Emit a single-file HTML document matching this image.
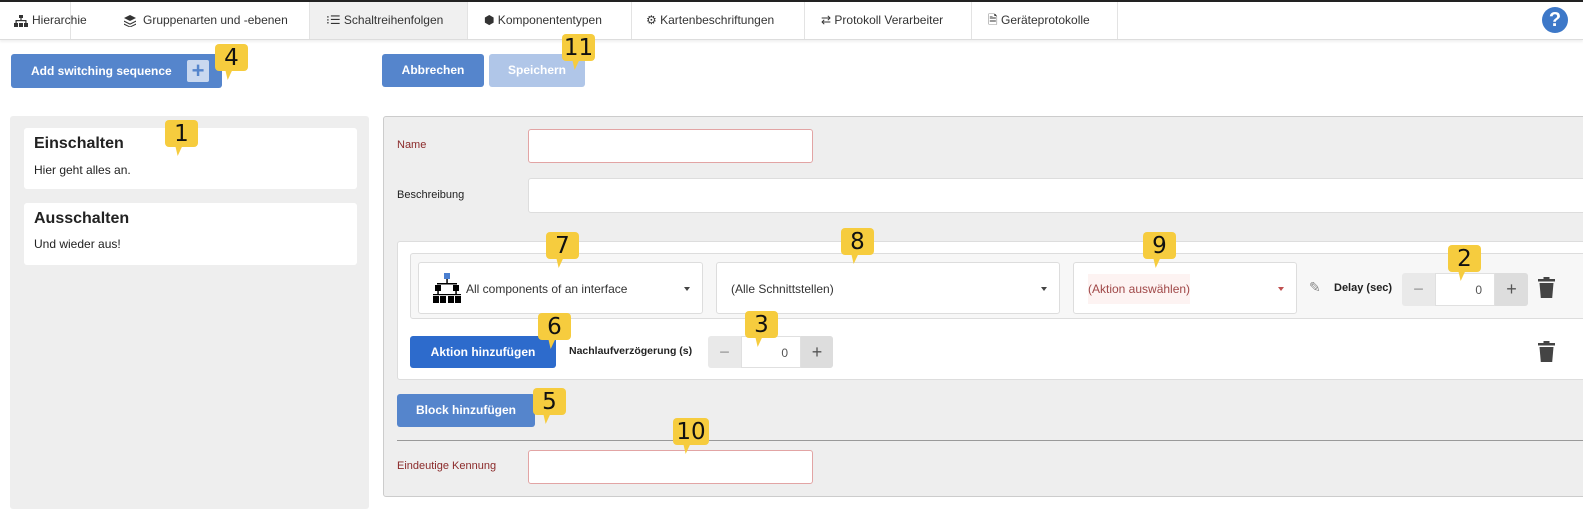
<!DOCTYPE html>
<html><head><meta charset="utf-8">
<style>
*{box-sizing:border-box;margin:0;padding:0}
body{width:1583px;height:509px;overflow:hidden;background:#fff;font-family:"Liberation Sans",sans-serif;font-size:12px;color:#222;position:relative}
.a{position:absolute}
.nav{left:0;top:0;width:1583px;height:40px;border-top:2px solid #222;border-bottom:1px solid #ddd;box-shadow:0 2px 2px rgba(0,0,0,.06)}
.tab{position:absolute;top:2px;height:37px;line-height:37px;font-size:12px;color:#333;border-right:1px solid #e3e3e3;padding-left:14px;white-space:nowrap}
.btn{position:absolute;color:#fff;font-weight:bold;font-size:12px;text-align:center;border-radius:3px}
.call{position:absolute;background:#f6cc3e;border-radius:4px;width:33px;height:27px;font-size:23px;line-height:28px;text-align:center;color:#111;font-family:"DejaVu Sans",sans-serif}
.call:after{content:"";position:absolute;left:8px;bottom:-9px;border-left:7px solid transparent;border-top:10px solid #f6cc3e;transform:skewX(-25deg)}
.inp{position:absolute;background:#fff;border:1px solid #ddd;border-radius:3px}
.red{border-color:#e2a4a4}
.lbl{position:absolute;font-size:11px}
.sel{position:absolute;background:#fff;border:1px solid #ddd;border-radius:3px;font-size:12px;color:#333;line-height:52px;padding-left:14px;white-space:nowrap}
.caret{position:absolute;right:12px;top:24px;border-left:3.5px solid transparent;border-right:3.5px solid transparent;border-top:4px solid #444}
.step{position:absolute;background:#e9e9e9;border-radius:3px;height:33px}
.step span{position:absolute;top:0;height:100%;line-height:32px;text-align:center;font-size:18px;color:#999}
.step i{position:absolute;top:0;height:100%;background:#fff;font-style:normal;text-align:right;padding-right:12px;line-height:32px;font-size:12px;color:#555;border:1px solid #e0e0e0}
</style></head><body>
<div class="a nav"></div>
<div class="tab" style="left:0;width:71px">
<svg class="a" style="left:14px;top:13px" width="14" height="12" viewBox="0 0 14 12"><rect x="5" y="0" width="4" height="3" fill="#333"/><rect x="6.4" y="3" width="1.2" height="3" fill="#333"/><rect x="1.5" y="5" width="11" height="1.2" fill="#333"/><rect x="1.5" y="5" width="1.2" height="3" fill="#333"/><rect x="11.3" y="5" width="1.2" height="3" fill="#333"/><rect x="0" y="8" width="4" height="4" fill="#333"/><rect x="5" y="8" width="4" height="4" fill="#333"/><rect x="10" y="8" width="4" height="4" fill="#333"/></svg>
<span style="margin-left:18px">Hierarchie</span></div>
<div class="tab" style="left:71px;width:239px">
<svg class="a" style="left:53px;top:13px" width="12" height="12" viewBox="0 0 12 12"><path d="M6 0L12 3 6 6 0 3z" fill="#333"/><path d="M0 5.5L6 8.5 12 5.5 12 6.8 6 9.8 0 6.8z" fill="#333"/><path d="M0 8.5L6 11.5 12 8.5 12 9.8 6 12.5 0 9.8z" fill="#333"/></svg>
<span style="margin-left:58px">Gruppenarten und -ebenen</span></div>
<div class="tab" style="left:310px;width:158px;background:#f0f0f0"><span style="margin-left:2px">⁝☰ Schaltreihenfolgen</span></div>
<div class="tab" style="left:468px;width:164px"><span style="margin-left:2px">⬢ Komponententypen</span></div>
<div class="tab" style="left:632px;width:173px"><span style="margin-left:0px">⚙ Kartenbeschriftungen</span></div>
<div class="tab" style="left:805px;width:167px"><span style="margin-left:2px">⇄ Protokoll Verarbeiter</span></div>
<div class="tab" style="left:972px;width:146px"><span style="margin-left:2px">🗎 Geräteprotokolle</span></div>
<div class="a" style="left:1542px;top:7px;width:26px;height:26px;border-radius:50%;background:#3d78c8;color:#fff;font-weight:bold;font-size:20px;text-align:center;line-height:26px">?</div>

<div class="btn" style="left:11px;top:54px;width:211px;height:34px;background:#5585cc;line-height:34px;text-align:left;padding-left:20px">Add switching sequence<span class="a" style="left:176px;top:6px;width:22px;height:22px;background:#c9d8ef;border-radius:2px;color:#5585cc;font-size:22px;line-height:22px;text-align:center">+</span></div>
<div class="btn" style="left:382px;top:54px;width:102px;height:33px;background:#5585cc;line-height:33px">Abbrechen</div>
<div class="btn" style="left:489px;top:54px;width:96px;height:33px;background:#b0c6e8;line-height:33px">Speichern</div>

<div class="a" style="left:10px;top:116px;width:359px;height:393px;background:#eee;border-radius:3px"></div>
<div class="a" style="left:24px;top:128px;width:333px;height:61px;background:#fff;border-radius:3px"><div class="a" style="left:10px;top:7px;font-size:16px;font-weight:bold">Einschalten</div><div class="a" style="left:10px;top:35px;font-size:12px">Hier geht alles an.</div></div>
<div class="a" style="left:24px;top:203px;width:333px;height:62px;background:#fff;border-radius:3px"><div class="a" style="left:10px;top:7px;font-size:16px;font-weight:bold">Ausschalten</div><div class="a" style="left:10px;top:34px;font-size:12px">Und wieder aus!</div></div>

<div class="a" style="left:383px;top:116px;width:1210px;height:381px;background:#eee;border:1px solid #ccc;border-radius:3px"></div>
<div class="lbl" style="left:397px;top:139px;color:#8b2a2a">Name</div>
<div class="inp red" style="left:528px;top:129px;width:285px;height:34px"></div>
<div class="lbl" style="left:397px;top:189px">Beschreibung</div>
<div class="inp" style="left:528px;top:178px;width:1060px;height:35px"></div>

<div class="a" style="left:397px;top:241px;width:1190px;height:139px;background:#fff;border:1px solid #ddd;border-radius:3px"></div>
<div class="a" style="left:410px;top:253px;width:1180px;height:66px;background:#f7f7f7;border:1px solid #ddd;border-radius:3px"></div>
<div class="sel" style="left:418px;top:262px;width:285px;height:52px;padding-left:47px">All components of an interface<div class="caret"></div>
<svg class="a" style="left:14px;top:10px" width="28" height="31" viewBox="0 0 28 31"><rect x="11" y="0" width="6" height="6" fill="#4a7fd0"/><rect x="13.3" y="6" width="1.5" height="5" fill="#000"/><rect x="4" y="10" width="20" height="1.5" fill="#000"/><rect x="2" y="12" width="6" height="6" fill="#000"/><rect x="20" y="12" width="6" height="6" fill="#000"/><rect x="4.3" y="18" width="1.5" height="4" fill="#000"/><rect x="22.3" y="18" width="1.5" height="4" fill="#000"/><rect x="0" y="21" width="14" height="1.2" fill="#000"/><rect x="14" y="21" width="14" height="1.2" fill="#000"/><rect x="0" y="23" width="6" height="7" fill="#000"/><rect x="7" y="23" width="6" height="7" fill="#000"/><rect x="15" y="23" width="6" height="7" fill="#000"/><rect x="22" y="23" width="6" height="7" fill="#000"/></svg></div>
<div class="sel" style="left:716px;top:262px;width:344px;height:52px">(Alle Schnittstellen)<div class="caret"></div></div>
<div class="sel red" style="left:1073px;top:262px;width:224px;height:52px;color:#a04848"><span style="background:#fdf3f2;padding:8px 0">(Aktion auswählen)</span><div class="caret" style="border-top-color:#c05050"></div></div>
<div class="a" style="left:1309px;top:279px;font-size:14px;color:#888">✎</div>
<div class="lbl" style="left:1334px;top:282px;font-weight:bold">Delay (sec)</div>
<div class="step" style="left:1402px;top:273px;width:126px"><span style="left:0;width:33px">−</span><i style="left:33px;width:60px">0</i><span style="left:93px;width:33px;background:#ddd;color:#555;border-radius:0 3px 3px 0">+</span></div>
<svg class="a" style="left:1538px;top:277px" width="17" height="21" viewBox="0 0 17 21"><rect x="0" y="2" width="17" height="2.5" fill="#444"/><rect x="5.5" y="0" width="6" height="2.5" fill="#444"/><path d="M1.5 6h14l-1.3 15H2.8z" fill="#444"/></svg>

<div class="btn" style="left:410px;top:336px;width:146px;height:32px;background:#2d6bcc;line-height:32px">Aktion hinzufügen</div>
<div class="lbl" style="left:569px;top:345px;font-weight:bold;font-size:10.5px">Nachlaufverzögerung (s)</div>
<div class="step" style="left:708px;top:336px;width:125px;height:32px"><span style="left:0;width:33px">−</span><i style="left:33px;width:60px">0</i><span style="left:93px;width:32px;background:#ddd;color:#555;border-radius:0 3px 3px 0">+</span></div>
<svg class="a" style="left:1538px;top:341px" width="17" height="21" viewBox="0 0 17 21"><rect x="0" y="2" width="17" height="2.5" fill="#444"/><rect x="5.5" y="0" width="6" height="2.5" fill="#444"/><path d="M1.5 6h14l-1.3 15H2.8z" fill="#444"/></svg>

<div class="btn" style="left:397px;top:394px;width:138px;height:33px;background:#5585cc;line-height:33px">Block hinzufügen</div>
<div class="a" style="left:397px;top:440px;width:1186px;height:1px;background:#999"></div>
<div class="lbl" style="left:397px;top:460px;color:#8b2a2a">Eindeutige Kennung</div>
<div class="inp red" style="left:528px;top:450px;width:285px;height:34px"></div>

<div class="call" style="left:215px;top:44px">4</div>
<div class="call" style="left:562px;top:34px;width:33px">11</div>
<div class="call" style="left:165px;top:120px">1</div>
<div class="call" style="left:546px;top:232px">7</div>
<div class="call" style="left:841px;top:228px">8</div>
<div class="call" style="left:1143px;top:232px">9</div>
<div class="call" style="left:1448px;top:245px">2</div>
<div class="call" style="left:538px;top:313px">6</div>
<div class="call" style="left:745px;top:311px">3</div>
<div class="call" style="left:533px;top:388px">5</div>
<div class="call" style="left:673px;top:418px;width:36px">10</div>
</body></html>
